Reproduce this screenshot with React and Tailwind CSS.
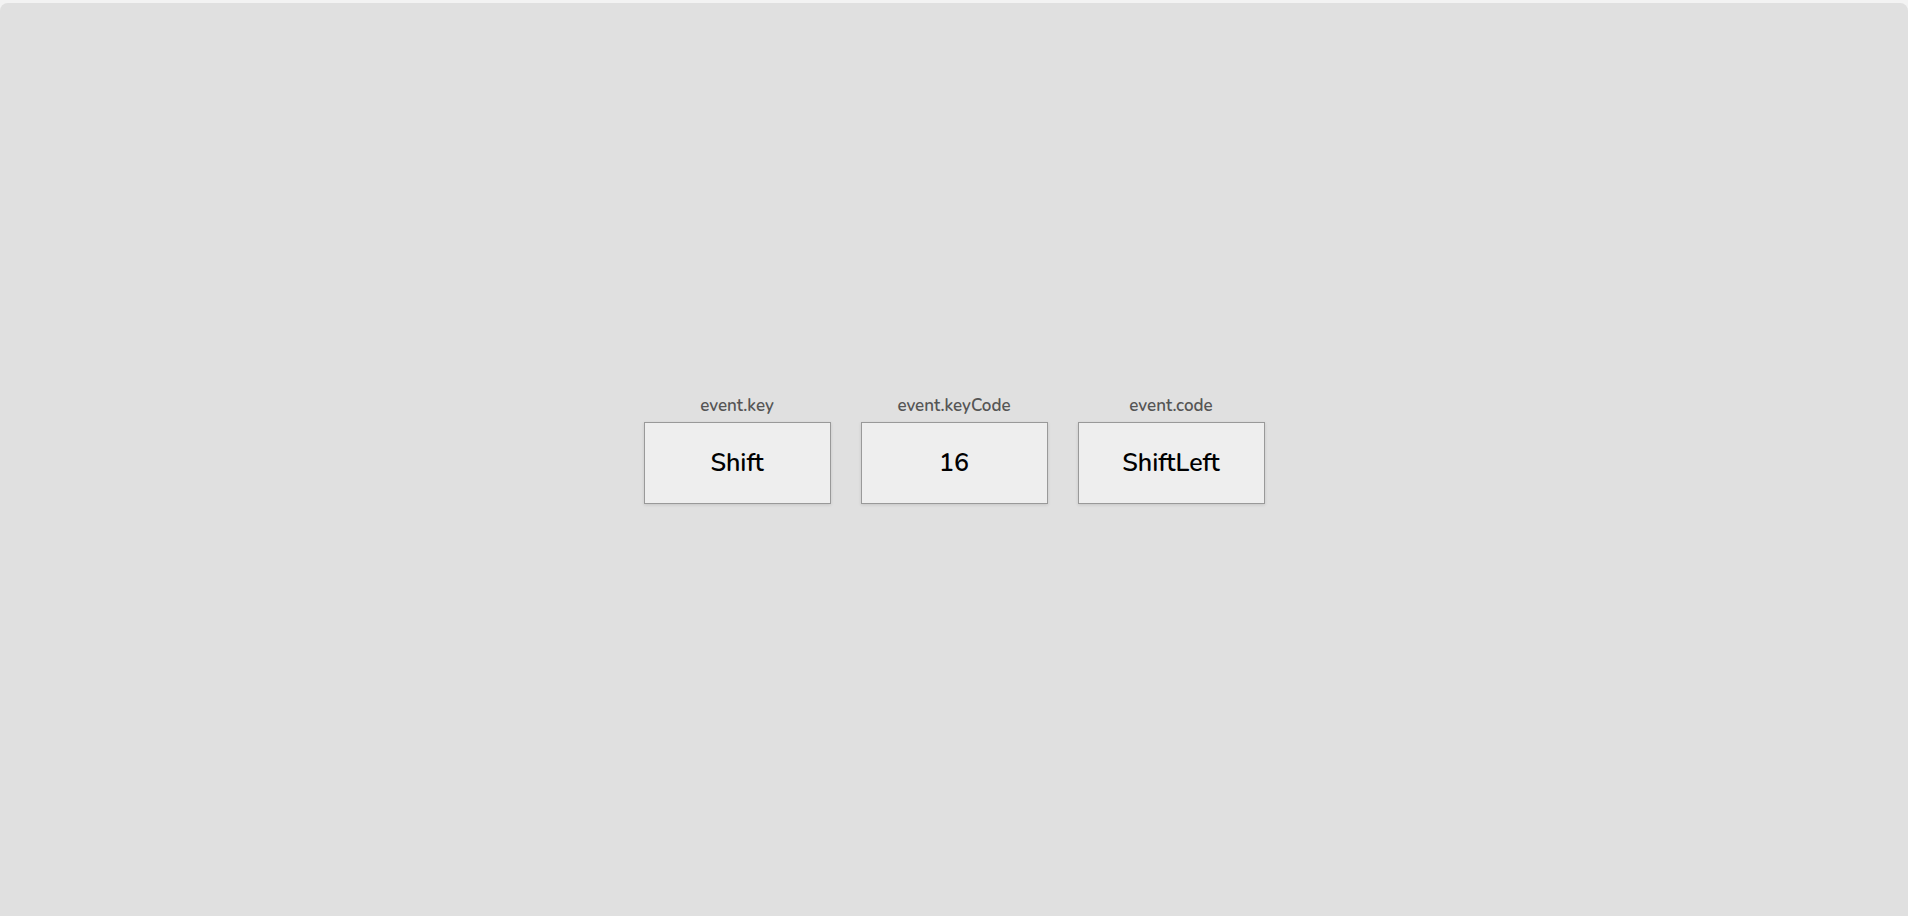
export default function App() {
  const items = [
    { label: "event.key", value: "Shift" },
    { label: "event.keyCode", value: "16" },
    { label: "event.code", value: "ShiftLeft" },
  ];
  return (
    <div className="w-[1908px] h-[916px] bg-[#f3f3f3] pt-[3px] overflow-hidden" style={{ fontFamily: '"Nunito", "Lato", "Open Sans", sans-serif' }}>
      <div className="h-[913px] rounded-t-[8px] bg-[#e0e0e0] flex items-center justify-center pb-[20px]">
        <div className="flex gap-[30px]">
          {items.map((it) => (
            <div key={it.label} className="flex flex-col items-center">
              <div className="text-[17px] leading-[20px] font-semibold text-[#555] mb-[6px]">{it.label}</div>
              <div className="w-[187px] h-[82px] border border-[#999] bg-[#eeeeee] shadow-[0_1px_3px_rgba(0,0,0,0.12)] flex items-center justify-center pt-[3px] text-[25px] font-semibold text-black">
                {it.value}
              </div>
            </div>
          ))}
        </div>
      </div>
    </div>
  );
}
